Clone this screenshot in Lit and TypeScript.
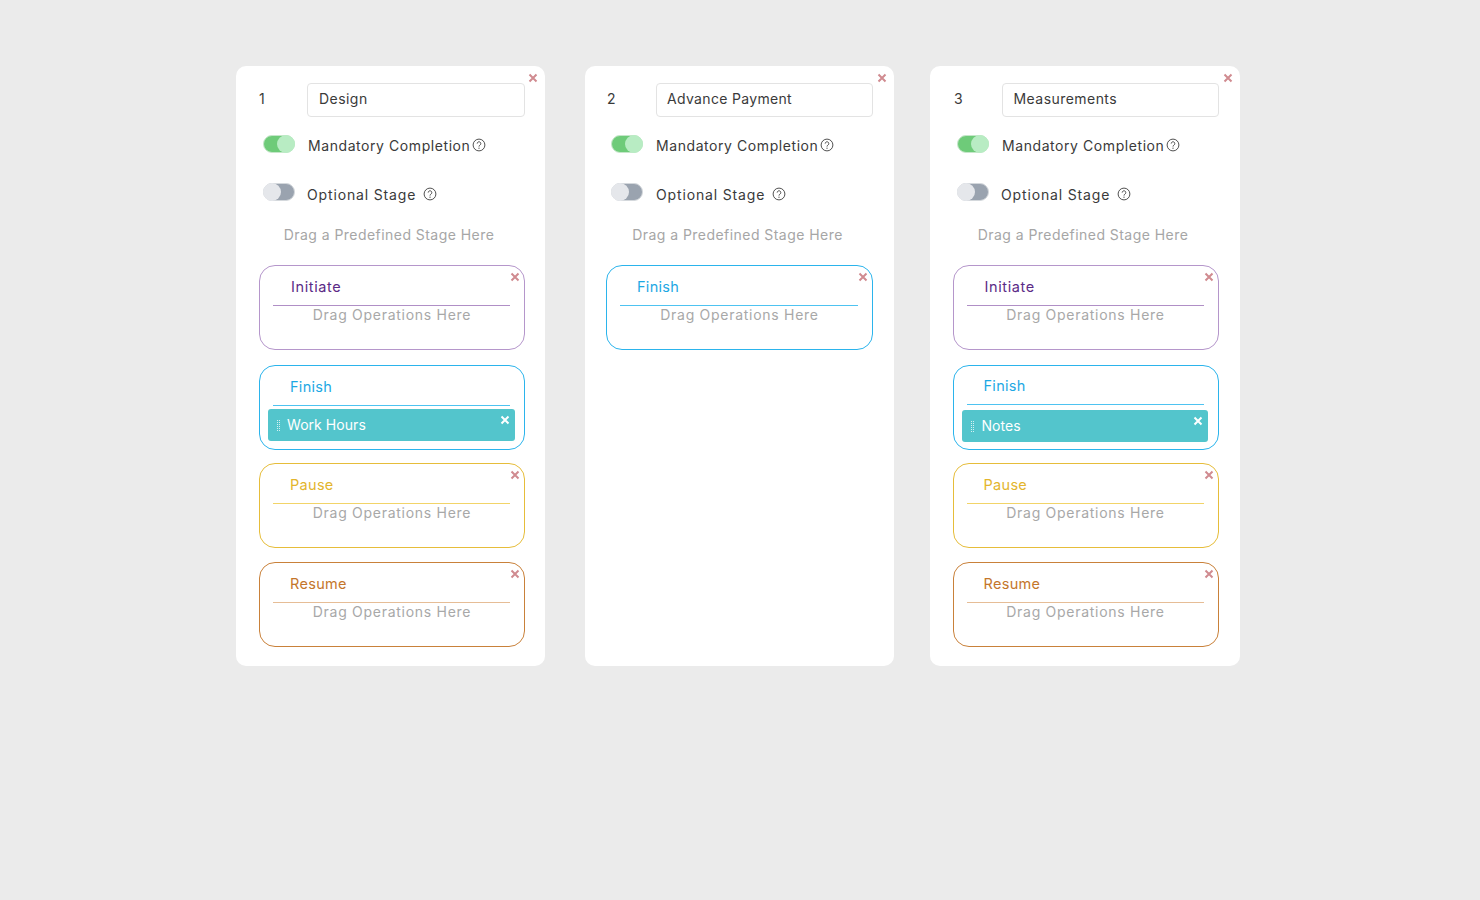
import { LitElement, html, css, svg } from "lit";
import { customElement } from "lit/decorators.js";

type Stage = { kind: string; name: string; chip?: string };
type Col = { cls: string; n: number; title: string; stages: Stage[] };

const allStages = (chip: string): Stage[] => [
  { kind: "initiate", name: "Initiate" },
  { kind: "finish", name: "Finish", chip },
  { kind: "pause", name: "Pause" },
  { kind: "resume", name: "Resume" },
];

const cols: Col[] = [
  { cls: "c1", n: 1, title: "Design", stages: allStages("Work Hours") },
  { cls: "c2", n: 2, title: "Advance Payment", stages: [{ kind: "finish", name: "Finish" }] },
  { cls: "c3", n: 3, title: "Measurements", stages: allStages("Notes") },
];

const cross = svg`<svg class="x" viewBox="0 0 10 10" width="10" height="10"><path d="M1.5 1.5l7 7M8.5 1.5l-7 7" fill="none" stroke="currentColor" stroke-width="2"/></svg>`;
const help = svg`<svg class="help" viewBox="0 0 14 14" width="14" height="14"><circle cx="7" cy="7" r="5.9" fill="none" stroke="#3d3d3d" stroke-width="0.9"/><path d="M5.2 5.6a1.8 1.8 0 1 1 2.9 1.4c-.7.5-1.1.8-1.1 1.6" fill="none" stroke="#3d3d3d" stroke-width="0.9"/><circle cx="7" cy="10.2" r=".6" fill="#3d3d3d"/></svg>`;
const grip = svg`<svg class="grip" viewBox="0 0 3 11" width="3" height="11"><path d="M0.5 0v11M2.5 0v11" stroke="#fff" stroke-opacity=".75" stroke-width="1" stroke-dasharray="1 1" fill="none"/></svg>`;

@customElement("app-root")
export class AppRoot extends LitElement {
  static styles = css`
    :host {
      display: block;
      min-height: 900px;
      background: #ebebeb;
      font-family: "Inter", "Noto Sans", sans-serif;
      color: #3a3a3a;
    }
    .board { display: flex; align-items: flex-start; padding: 66px 0 0 236px; }
    .card {
      position: relative;
      box-sizing: border-box;
      width: 309px;
      height: 600px;
      background: #fff;
      border-radius: 10px;
      padding-top: 17px;
      display: flex;
      flex-direction: column;
    }
    .c1 { padding-left: 23px; }
    .c2 { padding-left: 21px; margin-left: 40px; }
    .c3 { padding-left: 22.5px; margin-left: 36px; width: 310px; }
    .x { display: block; }
    .card-close { position: absolute; top: 7px; right: 7px; color: #d08b90; line-height: 0; }
    .head { display: flex; align-items: center; height: 34px; width: 267px; }
    .num { box-sizing: border-box; width: 48px; font-size: 14px; margin-bottom: 4px; flex: none; }
    .c2 .num { width: 50px; padding-left: 1px; }
    .c3 .num { width: 49px; padding-left: 1.5px; }
    .input {
      box-sizing: border-box;
      width: 218px;
      height: 34px;
      border: 1px solid #e3e3e3;
      border-radius: 4px;
      padding: 0 0 4px 11px;
      display: flex;
      align-items: center;
      font-size: 14px;
      letter-spacing: 0.45px;
      color: #3a3a3a;
      flex: none;
    }
    .c2 .input { width: 217px; padding-left: 10px; letter-spacing: 0.33px; }
    .c3 .input { width: 217.5px; }
    .opt { display: flex; align-items: center; height: 18px; padding-left: 4px; }
    .c2 .opt { padding-left: 5px; }
    .c3 .opt { padding-left: 4.5px; }
    .opt.m { margin-top: 18px; }
    .opt.o { margin-top: 30px; }
    .toggle {
      box-sizing: border-box;
      position: relative;
      width: 32px;
      height: 18px;
      border-radius: 9px;
      border: 1px solid #d4d8dc;
      margin-right: 13px;
      flex: none;
    }
    .toggle::after {
      content: "";
      position: absolute;
      top: -1px;
      width: 18px;
      height: 18px;
      border-radius: 50%;
    }
    .toggle.on { background: #6ecb79; border-color: #c6e6ca; }
    .toggle.on::after { right: -1px; background: #b8ecc3; }
    .toggle.off { background: #9aa3af; }
    .toggle.off::after { left: -1px; background: #e5e7eb; }
    .label { font-size: 14px; white-space: nowrap; }
    .m .label { letter-spacing: 0.57px; margin-top: 2px; }
    .o .label { letter-spacing: 0.85px; margin-top: 4px; margin-left: -1px; }
    .c2 .o .label { margin-left: 0; }
    .help { display: block; flex: none; }
    .m .help { margin-left: 2px; margin-top: 1px; }
    .o .help { margin-left: 7px; margin-top: 3px; }
    .hint {
      width: 266px;
      text-align: center;
      font-size: 14px;
      letter-spacing: 0.45px;
      color: #a6a6a6;
      height: 20px;
      line-height: 20px;
      margin-top: 24px;
      margin-left: -3px;
    }
    .c2 .hint { margin-left: -1.5px; }
    .c3 .hint { margin-left: -2.5px; }
    .stages { display: flex; flex-direction: column; margin-top: 20px; width: 266px; }
    .c2 .stages { width: 267px; }
    .stage {
      box-sizing: border-box;
      position: relative;
      height: 85px;
      border: 1px solid;
      border-radius: 16px;
      flex: none;
    }
    .stage-close { position: absolute; top: 6px; right: 4px; line-height: 0; color: #d08b90; }
    .title {
      box-sizing: border-box;
      height: 40px;
      margin: 0 14px 0 13px;
      padding: 11px 0 0 17px;
      font-size: 14.5px;
      line-height: 20px;
      letter-spacing: 0.3px;
      border-bottom: 1px solid;
    }
    .drop {
      text-align: center;
      font-size: 14px;
      line-height: 18px;
      letter-spacing: 0.72px;
      color: #a8a8a8;
    }
    .stage.initiate { border-color: #b596cb; }
    .initiate .title { color: #5b2a86; border-color: #b08fc6; padding-left: 18px; letter-spacing: 0.62px; }
    .stage.finish { border-color: #2bb4ec; margin-top: 15px; }
    .stage.finish:first-child { margin-top: 0; }
    .finish .title { color: #1da8e4; border-color: #4ec3f1; }
    .c3 .finish .title { height: 39px; padding-top: 10px; }
    .stage.pause { border-color: #e6bd3a; margin-top: 13px; }
    .pause .title { color: #e3b52d; border-color: #f2d468; }
    .stage.resume { border-color: #c9813a; margin-top: 14px; }
    .resume .title { color: #c4762b; border-color: #e6bd96; }
    .chip {
      box-sizing: border-box;
      position: relative;
      height: 32px;
      margin: 3px 9px 0 8px;
      background: #53c5cc;
      border-radius: 3px;
      display: flex;
      align-items: center;
      padding: 0 0 2px 9px;
      color: #fff;
      font-size: 14px;
      letter-spacing: 0.05px;
    }
    .c3 .chip { margin-top: 5px; margin-right: 10px; }
    .c3 .chip .name { margin-left: 1px; }
    .grip { display: block; margin: 2px 7px 0 0; flex: none; }
    .chip-close { position: absolute; top: 6px; right: 5px; line-height: 0; color: #fff; }
  `;

  renderStage(s: Stage) {
    return html`<div class="stage ${s.kind}">
      <div class="title">${s.name}</div>
      ${s.chip
        ? html`<div class="chip">${grip}<span class="name">${s.chip}</span><span class="chip-close">${cross}</span></div>`
        : html`<div class="drop">Drag Operations Here</div><span class="stage-close">${cross}</span>`}
    </div>`;
  }

  render() {
    return html`<div class="board">
      ${cols.map(
        (c) => html`<section class="card ${c.cls}">
          <span class="card-close">${cross}</span>
          <div class="head"><span class="num">${c.n}</span><div class="input">${c.title}</div></div>
          <div class="opt m"><span class="toggle on"></span><span class="label">Mandatory Completion</span>${help}</div>
          <div class="opt o"><span class="toggle off"></span><span class="label">Optional Stage</span>${help}</div>
          <div class="hint">Drag a Predefined Stage Here</div>
          <div class="stages">${c.stages.map((s) => this.renderStage(s))}</div>
        </section>`
      )}
    </div>`;
  }
}
